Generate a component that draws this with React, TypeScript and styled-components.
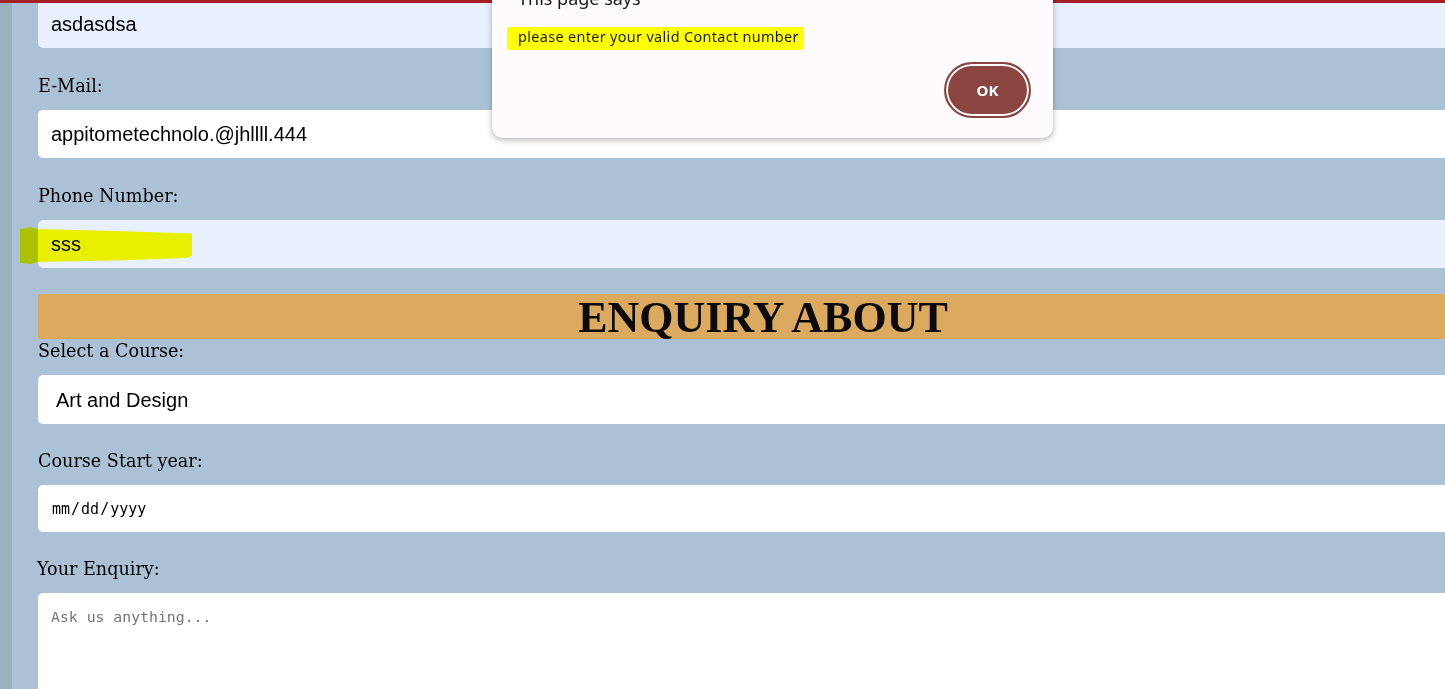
import React from "react";
import styled, { createGlobalStyle } from "styled-components";

const GlobalStyle = createGlobalStyle`
  html, body {
    margin: 0;
    padding: 0;
    overflow: hidden;
    background: #abc2d6;
  }
  body {
    font-family: "DejaVu Serif", Georgia, serif;
  }
`;

const Page = styled.div`
  display: flex;
  width: 1445px;
  height: 689px;
  overflow: hidden;
  position: relative;
`;

const SideStrip = styled.div`
  flex: none;
  width: 12px;
  background: #99b2c0;
`;

const Main = styled.main`
  flex: none;
  width: 1450px;
  padding-left: 26px;
  background: #abc2d6;
`;

const Form = styled.form`
  display: flex;
  flex-direction: column;
`;

const Field = styled.div`
  display: flex;
  flex-direction: column;
  position: relative;
`;

const Label = styled.label<{ $shift?: number }>`
  display: block;
  font-family: "DejaVu Serif", Georgia, serif;
  font-size: 17.6px;
  line-height: 24px;
  color: #000;
  margin: 0 0 12px ${(p) => p.$shift ?? 0}px;
`;

const TextInput = styled.input<{ $filled?: boolean }>`
  box-sizing: border-box;
  height: 48px;
  width: 100%;
  border: none;
  border-radius: 5px;
  padding: 0 13px;
  margin: 0 0 26px;
  font-family: "Liberation Sans", Arial, sans-serif;
  font-size: 20px;
  color: #000;
  background: ${(p) => (p.$filled ? "#e8f0fe" : "#ffffff")};
  outline: none;
`;

const SelectBox = styled.select`
  box-sizing: border-box;
  height: 49px;
  width: 100%;
  border: none;
  border-radius: 5px;
  padding: 0 18px;
  margin: 0 0 25px;
  font-family: "Liberation Sans", Arial, sans-serif;
  font-size: 20px;
  color: #000;
  background: #fff;
  appearance: none;
  outline: none;
`;

const DateInput = styled.input`
  box-sizing: border-box;
  height: 47px;
  width: 100%;
  border: none;
  border-radius: 5px;
  padding: 0 13px;
  margin: 0 0 25px;
  font-family: "DejaVu Sans Mono", "Liberation Mono", monospace;
  font-size: 15px;
  color: #000;
  background: #fff;
  outline: none;
`;

const TextArea = styled.textarea`
  box-sizing: border-box;
  height: 140px;
  width: 100%;
  border: none;
  border-radius: 5px;
  padding: 15px 13px;
  font-family: "DejaVu Sans Mono", "Liberation Mono", monospace;
  font-size: 14.8px;
  line-height: 18px;
  color: #000;
  background: #fff;
  resize: none;
  outline: none;
  &::placeholder {
    color: #767676;
  }
`;

const Band = styled.h2`
  margin: 0;
  height: 45px;
  background: #dcaa5e;
  text-align: center;
  font-family: "Liberation Serif", "Times New Roman", serif;
  font-weight: 700;
  font-size: 44px;
  line-height: 47px;
  color: #0a0a0a;
`;

const Marker = styled.div`
  position: absolute;
  left: -18px;
  top: 42px;
  width: 172px;
  height: 38px;
  background: #ffff00;
  mix-blend-mode: multiply;
  clip-path: polygon(0% 8%, 6% 3%, 10% 8%, 60% 14%, 100% 20%, 100% 78%, 97% 84%, 60% 90%, 10% 95%, 6% 100%, 0% 97%);
  pointer-events: none;
`;

const TopBar = styled.div`
  position: absolute;
  left: 0;
  top: 0;
  width: 100%;
  height: 3px;
  background: #a61f24;
  z-index: 5;
`;

const Dialog = styled.div`
  position: absolute;
  left: 492px;
  top: -26px;
  width: 561px;
  box-sizing: border-box;
  padding: 12px 22px 20px 26px;
  background: #fffafd;
  border-radius: 10px;
  box-shadow: 0 2px 6px rgba(0, 0, 0, 0.28), 0 0 1px rgba(0, 0, 0, 0.2);
  font-family: "Noto Sans", "Open Sans", sans-serif;
  z-index: 10;
  display: flex;
  flex-direction: column;
`;

const DialogTitle = styled.div`
  font-size: 18px;
  line-height: 24px;
  color: #1b1b1b;
`;

const DialogMessage = styled.div`
  margin-top: 17px;
  font-size: 14.4px;
  line-height: 18px;
  letter-spacing: 0.35px;
  color: #1b1b1b;
`;

const Highlight = styled.span`
  display: inline-block;
  margin-left: -11px;
  padding: 1px 5px 4px 11px;
  background: #ffff00;
  border-radius: 3px 2px 4px 2px;
`;

const DialogActions = styled.div`
  margin-top: 12px;
  display: flex;
  justify-content: flex-end;
`;

const OkButton = styled.button`
  box-sizing: border-box;
  width: 87px;
  height: 56px;
  border: 2px solid #8b4540;
  border-radius: 28px;
  background: #8b4540;
  box-shadow: inset 0 0 0 2px #ffffff;
  color: #ffffff;
  font-family: "Noto Sans", "Open Sans", sans-serif;
  font-weight: 700;
  font-size: 15px;
  cursor: pointer;
`;

export default function App() {
  return (
    <>
      <GlobalStyle />
      <Page>
        <TopBar />
        <SideStrip />
        <Main>
          <Form onSubmit={(e) => e.preventDefault()}>
            <Field>
              <TextInput $filled defaultValue="asdasdsa" />
            </Field>
            <Field>
              <Label>E-Mail:</Label>
              <TextInput defaultValue="appitometechnolo.@jhllll.444" />
            </Field>
            <Field>
              <Label>Phone Number:</Label>
              <TextInput $filled defaultValue="sss" />
              <Marker />
            </Field>
            <Band>ENQUIRY ABOUT</Band>
            <Field>
              <Label>Select a Course:</Label>
              <SelectBox defaultValue="art">
                <option value="art">Art and Design</option>
                <option value="cs">Computer Science</option>
                <option value="bus">Business</option>
              </SelectBox>
            </Field>
            <Field>
              <Label>Course Start year:</Label>
              <DateInput type="date" />
            </Field>
            <Field>
              <Label $shift={-1}>Your Enquiry:</Label>
              <TextArea placeholder="Ask us anything..." />
            </Field>
          </Form>
        </Main>
        <Dialog role="alertdialog">
          <DialogTitle>This page says</DialogTitle>
          <DialogMessage>
            <Highlight>please enter your valid Contact number</Highlight>
          </DialogMessage>
          <DialogActions>
            <OkButton type="button">OK</OkButton>
          </DialogActions>
        </Dialog>
      </Page>
    </>
  );
}
